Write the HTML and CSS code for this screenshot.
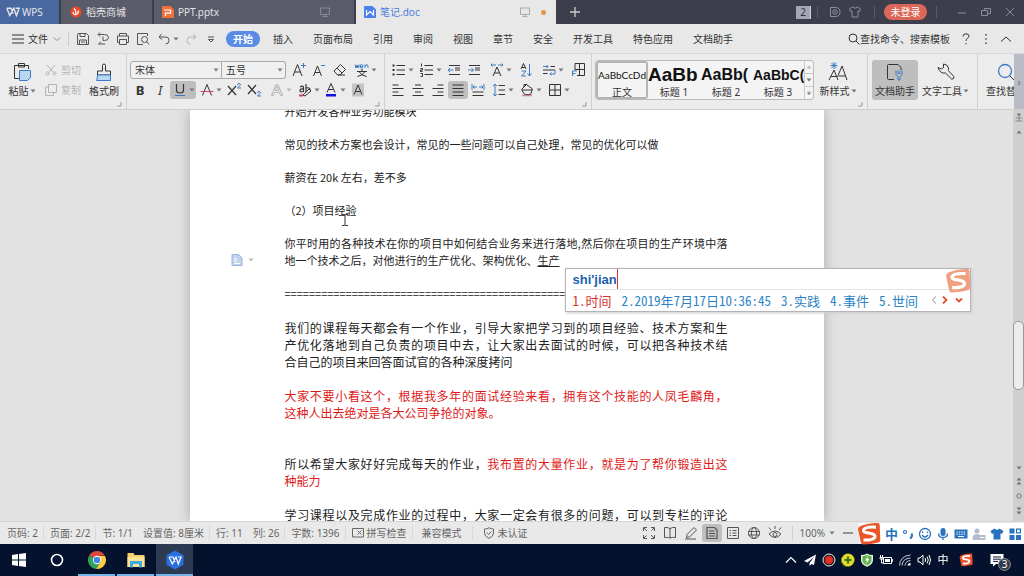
FILE: index.html
```html
<!DOCTYPE html>
<html lang="zh-CN">
<head>
<meta charset="utf-8">
<meta name="viewport" content="width=device-width, initial-scale=1">
<title>笔记.doc - WPS</title>
<link rel="stylesheet" href="styles.css">
</head>
<body>
<svg class="sprite" aria-hidden="true">
  <symbol id="down" viewBox="0 0 6 4"><path d="M0.5 0.5h5L3 3.5z" fill="currentColor"/></symbol>
  <symbol id="up" viewBox="0 0 6 4"><path d="M0.5 3.5h5L3 0.5z" fill="currentColor"/></symbol>
  <symbol id="corner" viewBox="0 0 6 6"><path d="M5 1v4H1" fill="none" stroke="currentColor"/></symbol>
  <symbol id="wps" viewBox="0 0 14 10"><path d="M.8 1.2H5l2 5.6M.8 1.2l3 7.4L7.8 1.2l2.6 7.4 2.8-7.4H9.6" fill="none" stroke="currentColor" stroke-width="1.4"/></symbol>
  <symbol id="monitor" viewBox="0 0 12 12"><path d="M1.5 2h9v6.5h-9zM6 8.500v2M3.500 10.500h5" fill="none" stroke="currentColor"/></symbol>
  <symbol id="sogou" viewBox="0 0 24 24"><path d="M5 3.500Q12 .5 21 1q1.500 0 1.700 2l.6 15q0 2-2 2.600-8 2-15 1.900-2 0-2.500-2L1 7q0-2 4-3.500z" fill="currentColor"/><path d="M19 5.200Q8 4.500 6.500 8c-1 4 11.500 2 11.500 6.300 0 3.500-7 4.200-11.500 3.600" fill="none" stroke="#fff" stroke-width="3"/></symbol>
  <symbol id="list" viewBox="0 0 16 16"><path d="M5.500 3.500H14M5.500 8H14M5.500 12.500H14" stroke="currentColor"/><path d="M1.500 2.500h2v2h-2zM1.500 7h2v2h-2zM1.500 11.500h2v2h-2z" fill="currentColor"/></symbol>
</svg>

<header class="titlebar">
  <button class="home-tab"><svg class="logo-s"><use href="#wps"/></svg>WPS</button>
  <button class="tab tab-shop"><svg class="file-ic" viewBox="0 0 12 12"><path d="M6 .5a5.500 5.500 0 1 1-5.300 7Q-.2 4 2 2.600 3.500 0 6 .5z" fill="#e84a26"/><path d="M4 2.500q2 2 2 5M8.500 4.500q0 3-2.500 4-2.500.5-3-2.500" fill="none" stroke="#fff" stroke-width="1.300"/></svg>稻壳商城</button>
  <button class="tab tab-file"><svg class="file-ic" viewBox="0 0 12 12"><path d="M1 0h7.500L12 3.500V11q0 1-1 1H1q-1 0-1-1V1q0-1 1-1z" fill="#f2703a"/><path d="M2 4h6.500v3.200H3.500V10" fill="none" stroke="#fff" stroke-width="1.200"/></svg>PPT.pptx<svg class="ic12 push"><use href="#monitor"/></svg></button>
  <button class="tab tab-file active"><svg class="file-ic" viewBox="0 0 12 12"><path d="M1 0h7.500L12 3.500V11q0 1-1 1H1q-1 0-1-1V1q0-1 1-1z" fill="#4a80ea"/><path d="M2.500 4v5L6 5.500 9.500 9V4" fill="none" stroke="#fff" stroke-width="1.200"/></svg>笔记.doc<svg class="ic12 push"><use href="#monitor"/></svg><span class="dot"></span></button>
  <button class="new-tab" aria-label="新建"><svg class="ic12" viewBox="0 0 12 12"><path d="M6 1v10M1 6h10" stroke="currentColor" stroke-width="1.300"/></svg></button>
  <div class="window-tools">
    <span class="count">2</span><i class="bar"></i>
    <svg class="ic14" viewBox="0 0 14 14"><path d="M2.500 2.500h5q4.500 0 4.500 4.500t-4.500 4.500h-5zM2.500 11.500v-9" fill="none" stroke="currentColor"/><circle cx="7" cy="7" r="2.300" fill="none" stroke="currentColor"/><circle cx="7" cy="7" r=".8" fill="currentColor"/></svg>
    <svg class="ic14" viewBox="0 0 14 14"><path d="M4.500 2 1.500 4l1 2.500 1.500-.5v6h6V6l1.500.5 1-2.500-3-2Q7 4.500 4.500 2z" fill="none" stroke="currentColor"/></svg>
    <i class="bar"></i><button class="login">未登录</button><i class="bar"></i>
    <button class="win" aria-label="最小化"><svg class="ic12" viewBox="0 0 12 12"><path d="M2 7h8" stroke="currentColor"/></svg></button>
    <button class="win" aria-label="还原"><svg class="ic12" viewBox="0 0 12 12"><path d="M1.500 4.500h6v5h-6zM4.500 4.500v-2h6v5h-3" fill="none" stroke="currentColor"/></svg></button>
    <button class="win" aria-label="关闭"><svg class="ic12" viewBox="0 0 12 12"><path d="m2 2 8 8M10 2l-8 8" stroke="currentColor"/></svg></button>
  </div>
</header>

<nav class="menubar">
  <button class="file-menu"><svg class="ic12" viewBox="0 0 12 12"><path d="M0 2h12M0 6h12M0 10h12" stroke="currentColor"/></svg>文件<svg class="ic10" viewBox="0 0 10 10"><path d="m1.500 3.500 3.500 3 3.500-3" fill="none" stroke="#999"/></svg></button>
  <div class="quick">
    <button class="ib" aria-label="保存"><svg class="ic" viewBox="0 0 16 16"><path d="M3 2.500h8.500l2 2v9H2.500v-10zM5 2.500v3h5v-3M4.500 13.500V9h7v4.500M6 11h4" fill="none" stroke="currentColor"/></svg></button>
    <button class="ib" aria-label="输出为PDF"><svg class="ic" viewBox="0 0 16 16"><path d="M3.500 3.500h6q4 0 4 3t-4 3H8V5.500M5 1.500l-2 2 2 2M10 13H3.500M6 11l-2.500 2" fill="none" stroke="currentColor"/></svg></button>
    <button class="ib" aria-label="打印"><svg class="ic" viewBox="0 0 16 16"><path d="M4.500 5V2.500h7V5M4.500 11.500H2.500V5h11v6.500h-2M4.500 8.500h7v5h-7z" fill="none" stroke="currentColor"/></svg></button>
    <button class="ib" aria-label="打印预览"><svg class="ic" viewBox="0 0 16 16"><path d="M12.500 5V2.500h-10v11H8" fill="none" stroke="currentColor"/><circle cx="9.500" cy="8.500" r="3" fill="none" stroke="currentColor"/><path d="m11.500 10.500 2.500 3" stroke="currentColor"/></svg></button>
    <button class="ib w28" aria-label="撤销"><svg class="ic" viewBox="0 0 16 16"><path d="M5.500 3 3 6l3 2.500M3.500 6H10q3 0 3 3.500T9.500 13" fill="none" stroke="currentColor"/></svg><svg class="arr"><use href="#down"/></svg></button>
    <button class="ib faint" aria-label="恢复"><svg class="ic" viewBox="0 0 16 16"><path d="M10.500 3 13 6l-3 2.500M12.500 6H7q-3 0-3 3.500T7.500 13" fill="none" stroke="currentColor"/></svg></button>
    <button class="ib" aria-label="自定义快速访问工具栏"><svg class="ic" viewBox="0 0 16 16"><path d="M5 6h6M5.500 8.500 8 11l2.500-2.500z" fill="none" stroke="currentColor"/></svg></button>
  </div>
  <div class="menus">
    <button class="on">开始</button><button>插入</button><button>页面布局</button><button>引用</button><button>审阅</button><button>视图</button><button>章节</button><button>安全</button><button>开发工具</button><button>特色应用</button><button>文档助手</button>
  </div>
  <div class="menu-right">
    <button class="find"><svg class="ic12" viewBox="0 0 12 12"><circle cx="5" cy="5" r="4" fill="none" stroke="currentColor"/><path d="m8 8 3.500 3.500" stroke="currentColor"/></svg>查找命令、搜索模板</button>
    <button class="ib" aria-label="帮助"><svg class="ic12" viewBox="0 0 12 12"><path d="M3 3.500Q3 .8 6 .8t3 2.500C9 5 6 5 6 8" fill="none" stroke="currentColor"/><path d="M6 10v1.300" stroke="currentColor"/></svg></button>
    <button class="ib" aria-label="更多"><svg class="ic12" viewBox="0 0 12 12"><path d="M6 1v1.500M6 5.200v1.500M6 9.500V11" stroke="currentColor" stroke-width="1.300"/></svg></button>
    <button class="ib" aria-label="收起功能区"><svg class="ic12" viewBox="0 0 12 12"><path d="M1 8.500 6 4l5 4.500" fill="none" stroke="currentColor"/></svg></button>
  </div>
</nav>

<section class="ribbon" aria-label="开始">
  <div class="group clip">
    <button class="big"><svg class="ic20" viewBox="0 0 20 20"><path d="M8 16.500H2.500V3.500h14V7M6.500 5V1.500h6V5z" fill="none" stroke="currentColor"/><path d="M7.500 8.500h11v7l-3 3h-8z" fill="#b9d7f2" stroke="#3c7cc4"/></svg><span>粘贴<svg class="arr"><use href="#down"/></svg></span></button>
    <div class="stack">
      <button class="side"><svg class="ic12" viewBox="0 0 12 12"><path d="m2 1 6.500 7.500M10 1 3.500 8.500" stroke="currentColor"/><circle cx="2.500" cy="9.500" r="1.500" fill="none" stroke="currentColor"/><circle cx="9.500" cy="9.500" r="1.500" fill="none" stroke="currentColor"/></svg>剪切</button>
      <button class="side"><svg class="ic12" viewBox="0 0 12 12"><path d="M3.500.5h8v8h-8zM3.500 3h-3v8.500h8v-3" fill="none" stroke="currentColor"/></svg>复制</button>
    </div>
    <button class="big"><svg class="ic20" viewBox="0 0 20 20"><path d="M8.500 9V3.500q0-1.500 1.500-1.500t1.500 1.500V9h5v4h-13V9z" fill="none" stroke="currentColor"/><path d="M3.500 13h13v5.500h-14q1-2 1-5.500z" fill="#b9d7f2" stroke="#3c7cc4"/></svg><span>格式刷</span></button>
    <svg class="launch"><use href="#corner"/></svg>
  </div>

  <div class="group font">
    <div class="row">
      <label class="combo wide"><select aria-label="字体"><option>宋体</option></select><svg class="arr"><use href="#down"/></svg></label><label class="combo"><select aria-label="字号"><option>五号</option></select><svg class="arr"><use href="#down"/></svg></label>
      <button class="ib grow" aria-label="增大字号"><svg class="ic" viewBox="0 0 16 16"><path d="M2 14 6.500 2.500 11 14M3.500 10h6" fill="none" stroke="currentColor"/><path d="M12.500 1v5M10 3.500h5" stroke="#3c7cc4"/></svg></button>
      <button class="ib" aria-label="减小字号"><svg class="ic" viewBox="0 0 16 16"><path d="M2.500 14 6.500 4l4 10M4 10.500h5" fill="none" stroke="currentColor"/><path d="M10 3.500h4" stroke="#3c7cc4"/></svg></button>
      <button class="ib" aria-label="清除格式"><svg class="ic" viewBox="0 0 16 16"><path d="m3 9 6.500-6.500 5 5L9 13H6.500zM6 6l5 5M7 13h7" fill="none" stroke="currentColor"/></svg></button>
      <button class="ib w32" aria-label="拼音指南"><svg class="ic" viewBox="0 0 16 16"><path d="M1 2.500 2 6l1-3 1 3 1-3.500M6 4.500h3q0-2-1.500-2T6 4.500 7.500 6H9M11 6V2.500M11 4q2.500-3 3 0v2" fill="none" stroke="#3c7cc4"/><path d="M8 7v2M3 9.500h10M5 9.500q2 4 7.500 5M11 9.500q-2 4-7.500 5" fill="none" stroke="currentColor"/></svg><svg class="arr"><use href="#down"/></svg></button>
    </div>
    <div class="row">
      <button class="ib glyph" aria-label="加粗"><b>B</b></button>
      <button class="ib glyph" aria-label="倾斜"><i>I</i></button>
      <button class="ib w26 pressed" aria-label="下划线"><svg class="ic" viewBox="0 0 16 16"><path d="M4.500 2v6q0 3 3.500 3t3.500-3V2" fill="none" stroke="currentColor" stroke-width="1.200"/><path d="M3 13.500h10" stroke="#3c7cc4"/></svg><svg class="arr"><use href="#down"/></svg></button>
      <button class="ib w28" aria-label="删除线"><svg class="ic" viewBox="0 0 16 16"><path d="M3.500 13.500 8 2.500l4.500 11" fill="none" stroke="currentColor"/><path d="M1.500 9.500h13" stroke="#d5455a"/></svg><svg class="arr"><use href="#down"/></svg></button>
      <button class="ib" aria-label="上标"><svg class="ic" viewBox="0 0 16 16"><path d="m2 4 8 9M10 4l-8 9" stroke="currentColor" stroke-width="1.200"/><path d="M11.500 3q0-1.500 1.500-1.500t1.500 1.300L11.500 6H15" fill="none" stroke="#3c7cc4"/></svg></button>
      <button class="ib" aria-label="下标"><svg class="ic" viewBox="0 0 16 16"><path d="m2 3 8 9M10 3l-8 9" stroke="currentColor" stroke-width="1.200"/><path d="M11.500 11q0-1.500 1.500-1.500t1.500 1.300L11.500 14H15" fill="none" stroke="#3c7cc4"/></svg></button>
      <button class="ib w32 faint" aria-label="文字效果"><svg class="ic" viewBox="0 0 16 16"><path d="M2.500 13.500 7 2.500h2l4.500 11h-2l-1-3h-5l-1 3zM6 8.500h4L8 4z" fill="none" stroke="currentColor"/></svg><svg class="arr"><use href="#down"/></svg></button>
      <button class="ib w24" aria-label="突出显示"><svg class="ic" viewBox="0 0 16 16"><path d="M3 5q3-2 3.500.5V10M6.500 7Q3 6.500 3 8.500t3.500 1M9 2v8q4 1 4-2t-4-2" fill="none" stroke="currentColor" stroke-width="1.200"/><path d="m6 13 6-6 2 2-6 5z" fill="#eee" stroke="currentColor"/><path d="M2 13.500h4" stroke="#c8485a" stroke-width="2"/></svg><svg class="arr"><use href="#down"/></svg></button>
      <button class="ib w28" aria-label="字体颜色"><svg class="ic" viewBox="0 0 16 16"><path d="M4 10.500 8 1.500l4 9M5.500 7.500h5" fill="none" stroke="currentColor"/><path d="M3 12h10v2.500H3z" fill="#1010e0"/></svg><svg class="arr"><use href="#down"/></svg></button>
      <button class="ib" aria-label="字符底纹"><svg class="ic" viewBox="0 0 16 16"><path d="M2 1.500h12v13H2z" fill="#c4c4c4"/><path d="M4 12.500 8 3l4 9.500M5.500 9.500h5" fill="none" stroke="currentColor"/></svg></button>
    </div>
    <svg class="launch"><use href="#corner"/></svg>
  </div>

  <div class="group para">
    <div class="row">
      <button class="ib w28" aria-label="项目符号"><svg class="ic"><use href="#list"/></svg><svg class="arr"><use href="#down"/></svg></button>
      <button class="ib w28" aria-label="编号"><svg class="ic" viewBox="0 0 16 16"><path d="M5.500 3.500H14M5.500 8H14M5.500 12.500H14M2.500 1.500v3M1.500 6.500h2v1.500h-2v1.500h2M1.500 11.500h2v3h-2" fill="none" stroke="currentColor"/></svg><svg class="arr"><use href="#down"/></svg></button>
      <button class="ib" aria-label="减少缩进"><svg class="ic" viewBox="0 0 16 16"><path d="M3 3.500h11M9 8h5M3 12.500h11M9 6h5" stroke="currentColor"/><path d="M7.500 8H2M4 6 2 8l2 2" fill="none" stroke="#3c7cc4"/></svg></button>
      <button class="ib" aria-label="增加缩进"><svg class="ic" viewBox="0 0 16 16"><path d="M3 3.500h11M9 8h5M3 12.500h11M9 6h5" stroke="currentColor"/><path d="M2 8h5.500M5.500 6l2 2-2 2" fill="none" stroke="#3c7cc4"/></svg></button>
      <button class="ib w32" aria-label="中文版式"><svg class="ic" viewBox="0 0 16 16"><path d="M4 14 8 5l4 9M5.500 11h5" fill="none" stroke="currentColor"/><path d="M7 3H2M3.500 1.500 2 3l1.500 1.500M9 3h5M12.500 1.500 14 3l-1.500 1.500" fill="none" stroke="#3c7cc4"/></svg><svg class="arr"><use href="#down"/></svg></button>
      <button class="ib" aria-label="排序"><svg class="ic" viewBox="0 0 16 16"><path d="M3 7 5.500 1.500 8 7M4 5.500h3" fill="none" stroke="currentColor"/><path d="M3.500 9H8l-4.500 5H8M11.500 2v12M9.500 11.500l2 2.500 2-2.500" fill="none" stroke="#3c7cc4"/></svg></button>
      <button class="ib w32" aria-label="显示编辑标记"><svg class="ic" viewBox="0 0 16 16"><path d="M9.500 4.500H14M2 8h12M2 11.500h4.500" stroke="currentColor"/><path d="M2 4.500h5M5.500 3 7 4.500 5.500 6M14 8v4H9M10.500 10.500 9 12l1.500 1.500" fill="none" stroke="#3c7cc4"/></svg><svg class="arr"><use href="#down"/></svg></button>
      <button class="ib" aria-label="制表位"><svg class="ic" viewBox="0 0 16 16"><path d="M5 8V1.500h9.500v12H7M5 7.500h9.500M9.500 1.500v12" fill="none" stroke="currentColor"/><path d="M2.500 14V9H7M2.500 11.500h3" fill="none" stroke="#3c7cc4"/></svg></button>
    </div>
    <div class="row">
      <button class="ib" aria-label="左对齐"><svg class="ic" viewBox="0 0 16 16"><path d="M2.500 3h6M2.500 6.500h11M2.500 10h6M2.500 13.500h11" stroke="currentColor"/></svg></button>
      <button class="ib" aria-label="居中"><svg class="ic" viewBox="0 0 16 16"><path d="M5 3h6M2.500 6.500h11M5 10h6M2.500 13.500h11" stroke="currentColor"/></svg></button>
      <button class="ib" aria-label="右对齐"><svg class="ic" viewBox="0 0 16 16"><path d="M7.500 3h6M2.500 6.500h11M7.500 10h6M2.500 13.500h11" stroke="currentColor"/></svg></button>
      <button class="ib pressed" aria-label="两端对齐"><svg class="ic" viewBox="0 0 16 16"><path d="M2.500 3h11M2.500 6.500h11M2.500 10h11M2.500 13.500h11" stroke="currentColor"/></svg></button>
      <button class="ib" aria-label="分散对齐"><svg class="ic" viewBox="0 0 16 16"><path d="M2.500 10h11M2.500 13.500h11" stroke="currentColor"/><path d="M2 2v6M14 2v6M3 5h4M4.500 3.500 3 5l1.500 1.500M9 5h4M11.500 3.500 13 5l-1.500 1.500" fill="none" stroke="#3c7cc4"/></svg></button>
      <button class="ib w28" aria-label="行距"><svg class="ic" viewBox="0 0 16 16"><path d="M7.500 3.500H14M7.500 8H14M7.500 12.500H14" stroke="currentColor"/><path d="M4 2v12M2 4l2-2 2 2M2 12l2 2 2-2" fill="none" stroke="#3c7cc4"/></svg><svg class="arr"><use href="#down"/></svg></button>
      <button class="ib w28" aria-label="底纹颜色"><svg class="ic" viewBox="0 0 16 16"><path d="m2.500 7.500 5-5 6 4.500-2 5.500h-6zM5 5V2.500h3M3 8h10" fill="none" stroke="currentColor"/><path d="M3 13.500h10" stroke="#d58a94" stroke-width="1.500"/></svg><svg class="arr"><use href="#down"/></svg></button>
      <button class="ib w28" aria-label="边框"><svg class="ic" viewBox="0 0 16 16"><path d="M2.500 2.500h11v11h-11zM8 2.500v11M2.500 8h11" fill="none" stroke="currentColor"/></svg><svg class="arr"><use href="#down"/></svg></button>
    </div>
    <svg class="launch"><use href="#corner"/></svg>
  </div>

  <div class="group styles">
    <div class="gallery">
      <button class="style chosen"><span class="s0">AaBbCcDd</span>正文</button>
      <button class="style"><span class="s1">AaBb</span>标题 1</button>
      <button class="style"><span class="s2">AaBb(</span>标题 2</button>
      <button class="style"><span class="s3">AaBbC(</span>标题 3</button>
      <div class="scroller"><button aria-label="上一行"><svg class="arr pale"><use href="#up"/></svg></button><button aria-label="下一行"><svg class="arr"><use href="#down"/></svg></button><button aria-label="全部样式"><svg class="arr" viewBox="0 0 6 6"><path d="M.5.500h5M.5 2.500h5L3 5.500z" fill="currentColor" stroke="currentColor" stroke-width=".6"/></svg></button></div>
    </div>
    <button class="big"><svg class="ic20" viewBox="0 0 20 20"><path d="M1 18 6 8l4 10M3 14.500h5M9.500 15 14 4l5 14M11 14h6.500" fill="none" stroke="currentColor"/><path d="M6 0v7M2.500 3.500h7M3.500 1l5 5M8.500 1l-5 5" stroke="#3c7cc4"/></svg><span>新样式<svg class="arr"><use href="#down"/></svg></span></button>
    <svg class="launch"><use href="#corner"/></svg>
  </div>

  <div class="group tools">
    <button class="big pressed"><svg class="ic20" viewBox="0 0 20 20"><path d="M9 17.500H3.500q-1 0-1-1v-13q0-1 1-1H13l3 3V8" fill="none" stroke="currentColor"/><path d="M11 8.500v4q1 1.500 2 2V18h2v-3.500q1-.5 2-2v-4M13 8.500v3h2v-3" fill="none" stroke="#3c7cc4"/></svg><span>文档助手</span></button>
    <button class="big"><svg class="ic20" viewBox="0 0 20 20"><path d="M2 5.500 5.500 7l2-1.500V2q4 0 5 4 .3 1.500-.2 2.500l5.500 6q.8 2.500-2 2.700L9.500 11Q4 12 2 5.500z" fill="none" stroke="currentColor"/></svg><span>文字工具<svg class="arr"><use href="#down"/></svg></span></button>
  </div>
  <div class="group search">
    <button class="big"><svg class="ic20" viewBox="0 0 20 20"><circle cx="9" cy="9" r="6.500" fill="none" stroke="#3c7cc4" stroke-width="1.300"/><path d="m14 14 4 4" stroke="currentColor"/></svg><span>查找替换</span></button>
  </div>
  <button class="more" aria-label="向右滚动">›</button>
</section>

<main class="workspace">
  <div class="canvas">
    <article class="page">
      <div class="text small">
        <p>开始开发各种业务功能模块</p>
        <p>常见的技术方案也会设计，常见的一些问题可以自己处理，常见的优化可以做</p>
        <p>薪资在 20k 左右，差不多</p>
        <p>（2）项目经验</p>
        <p><span class="full">你平时用的各种技术在你的项目中如何结合业务来进行落地,然后你在项目的生产环境中落</span>地一个技术之后，对他进行的生产优化、架构优化、<u>生产</u></p>
        <p class="rule">==============================================</p>
      </div>
      <div class="text large">
        <p><span class="full">我们的课程每天都会有一个作业，引导大家把学习到的项目经验、技术方案和生</span><span class="full">产优化落地到自己负责的项目中去，让大家出去面试的时候，可以把各种技术结</span>合自己的项目来回答面试官的各种深度拷问</p>
        <p class="red"><span class="full">大家不要小看这个，根据我多年的面试经验来看，拥有这个技能的人凤毛麟角，</span>这种人出去绝对是各大公司争抢的对象。</p>
        <p class="spaced"><span class="full">所以希望大家好好完成每天的作业，<span class="red">我布置的大量作业，就是为了帮你锻造出这</span></span><span class="red">种能力</span></p>
        <p><span class="full">学习课程以及完成作业的过程中，大家一定会有很多的问题，可以到专栏的评论</span></p>
      </div>
      <svg class="beam" viewBox="0 0 8 12"><path d="M1 .5h2.500l.5.500.5-.5H7M4 1v10M1 11.500h2.500l.5-.5.5.5H7" fill="none" stroke="#333"/></svg>
      <button class="smart" aria-label="段落布局"><svg class="ic12" viewBox="0 0 12 12"><path d="M1 .5h6.500L11 4v7.500H1z" fill="#c3d3ee" stroke="#9cb3dc"/><path d="M3 5h3M3 7h3M3 9.500h6" stroke="#fff"/></svg><svg class="arr"><use href="#down"/></svg></button>
      <div class="ime">
        <div class="compose">shi'jian</div>
        <ol class="cands"><li class="first">1.时间</li><li>2.2019年7月17日10:36:45</li><li>3.实践</li><li>4.事件</li><li>5.世间</li></ol>
        <svg class="pager" viewBox="0 0 36 10"><path d="M6 1.500 2.500 5 6 8.500" fill="none" stroke="#bbb" stroke-width="1.200"/><path d="M13 1.500 16.500 5 13 8.500M26 3.500 29 6.500l3-3" fill="none" stroke="#e0552c" stroke-width="1.800"/></svg>
        <svg class="ime-logo"><use href="#sogou"/></svg>
      </div>
    </article>
  </div>
  <aside class="scroll">
    <svg class="ic10" viewBox="0 0 10 10"><path d="M3 1h4L5 3zM1.500 5h7M1.500 8h7M5 3v5" fill="#777" stroke="#888"/></svg>
    <svg class="arr"><use href="#up"/></svg>
    <div class="track"><div class="thumb"></div></div>
    <svg class="arr"><use href="#down"/></svg>
    <svg class="ic8" viewBox="0 0 8 8"><path d="M1.500 3.500h5L4 .5zM1.500 7.500h5L4 4.500z" fill="currentColor"/></svg>
    <svg class="ic8" viewBox="0 0 8 8"><circle cx="4" cy="4" r="2.200" fill="none" stroke="currentColor"/></svg>
    <svg class="ic8" viewBox="0 0 8 8"><path d="M1.500.5h5L4 3.500zM1.500 4.500h5L4 7.500z" fill="currentColor"/></svg>
  </aside>
</main>

<footer class="status">
  <span class="cell">页码: 2</span><span class="cell">页面: 2/2</span><span class="cell open">节: 1/1</span><span class="cell">设置值: 8厘米</span><span class="cell open">行: 11</span><span class="cell">列: 26</span><span class="cell">字数: 1396</span>
  <button class="cell"><svg class="ic12" viewBox="0 0 12 12"><path d="M4 1.500H.5v8.500H4M4 1.500h7.500V10H4M5.500 3.500l4 4M9.500 3.500l-4 4" fill="none" stroke="currentColor"/></svg>拼写检查</button><button class="cell wide">兼容模式</button><button class="cell last"><svg class="ic12" viewBox="0 0 12 12"><path d="M6 .8q2 1.200 4.500 1.200v4Q10.500 9.500 6 11.300 1.500 9.500 1.500 6V2Q4 2 6 .8zM4 5.500l1.500 2L8.500 4.500" fill="none" stroke="currentColor"/></svg>未认证</button>
  <div class="views">
    <button class="ib" aria-label="全屏"><svg class="ic" viewBox="0 0 16 16"><path d="M2.500 6V2.500H6M10 2.500h3.500V6M13.500 10v3.500H10M6 13.500H2.500V10M3 3l3 3M13 13l-3-3M13 3l-2.500 2.500M3 13l2.500-2.500" fill="none" stroke="currentColor"/></svg></button>
    <button class="ib" aria-label="阅读版式"><svg class="ic" viewBox="0 0 16 16"><path d="M8 3.500Q5 2 2.500 2.500v10q3-.5 5.500.5 2.500-1 5.500-.5v-10Q11 2 8 3.500zV13" fill="none" stroke="currentColor"/></svg></button>
    <button class="ib" aria-label="写作模式"><svg class="ic" viewBox="0 0 16 16"><path d="m4 9.500 7-7 2.500 2.500-7 7-3 .5zM2 14h11" fill="none" stroke="currentColor"/></svg></button>
    <button class="ib pressed" aria-label="页面视图"><svg class="ic" viewBox="0 0 16 16"><path d="M3 2.500h7.500l2.500 2.500v8.500H3zM5 6h5.500M5 8.500h6M5 11h6" fill="none" stroke="currentColor" stroke-width="1.200"/></svg></button>
    <button class="ib" aria-label="大纲视图"><svg class="ic" viewBox="0 0 16 16"><path d="M2.500 2.500h11v11h-11zM4.500 5.500H6M7.500 5.500h4M4.500 8H6M7.500 8h4M4.500 10.500H6M7.500 10.500h4" fill="none" stroke="currentColor"/></svg></button>
    <button class="ib" aria-label="Web版式"><svg class="ic" viewBox="0 0 16 16"><circle cx="8" cy="8" r="5.500" fill="none" stroke="currentColor"/><ellipse cx="8" cy="8" rx="2.500" ry="5.500" fill="none" stroke="currentColor"/><path d="M2.500 6.500h11M2.500 10h11" stroke="currentColor"/></svg></button>
    <button class="ib" aria-label="护眼模式"><svg class="ic" viewBox="0 0 16 16"><path d="M2 9q6-6 12 0-6 7-12 0zM8 4V1M4 5 2 2.500M12 5l2-2.500" fill="none" stroke="currentColor"/><circle cx="8" cy="9.500" r="2" fill="none" stroke="currentColor"/></svg></button>
  </div>
  <button class="zoom">100%<svg class="arr"><use href="#down"/></svg></button>
  <button class="minus" aria-label="缩小"><svg class="ic10" viewBox="0 0 10 10"><path d="M0 5h10" stroke="currentColor" stroke-width="1.300"/></svg></button>
  <div class="imebar">
    <svg class="bar-logo"><use href="#sogou"/></svg>
    <span class="zh">中</span>
    <svg class="ic12" viewBox="0 0 12 12"><circle cx="3" cy="4" r="1.500" fill="none" stroke="currentColor" stroke-width="1.200"/><path d="M9.500 5.500q1.500 3-1.500 5" fill="none" stroke="currentColor" stroke-width="2"/></svg>
    <svg class="ic14" viewBox="0 0 14 14"><circle cx="7" cy="7" r="5.500" fill="none" stroke="currentColor" stroke-width="1.300"/><path d="M4 8q3 4 6 0M4.500 4.500v1.500M9.500 4.500v1.500" fill="none" stroke="currentColor" stroke-width="1.300"/></svg>
    <svg class="ic14" viewBox="0 0 14 14"><rect x="4.500" y="1" width="5" height="8" rx="2.500" fill="currentColor"/><path d="M2.500 6.500q0 4 4.500 4t4.500-4M7 10.500V13" fill="none" stroke="currentColor" stroke-width="1.300"/></svg>
    <svg class="ic14" viewBox="0 0 14 14"><path d="M.5 2.500h13v9H.5z" fill="currentColor"/><path d="M2.500 5h9M2.500 7.200h9" stroke="#fff" stroke-dasharray="1.400 1"/><path d="M4 9.500h6" stroke="#fff"/></svg>
    <svg class="ic14 pale-ic" viewBox="0 0 14 14"><circle cx="5" cy="4" r="2.500" fill="currentColor"/><path d="M.5 12q0-5 4.500-5 2 0 3 1h5.500v5H.5z" fill="currentColor"/><path d="M8 10.500h4.500" stroke="#fff"/></svg>
    <svg class="ic14" viewBox="0 0 14 14"><path d="M4.500 1.500.5 4l1.500 3 1.500-.7V12.500h7V6.300L12 7l1.500-3-4-2.500Q7 4 4.500 1.500z" fill="currentColor"/></svg>
    <svg class="ic14" viewBox="0 0 14 14"><path d="M1.500 1.500h5v5h-5zM1.500 8h5v5h-5zM8 8h5v5H8z" fill="currentColor"/><path d="M8.600 2.100h3.800v3.800H8.600z" fill="none" stroke="currentColor" stroke-width="1.200"/></svg>
  </div>
</footer>

<div class="taskbar">
  <button class="task" aria-label="开始菜单"><svg class="ic14" viewBox="0 0 14 14"><path d="m0 2 6-.9v5.400H0zM7 1l7-1v6.500H7zM0 7.500h6v5.400L0 12zM7 7.500h7V14l-7-1z" fill="#fff"/></svg></button>
  <button class="task" aria-label="Cortana"><svg class="ic14" viewBox="0 0 14 14"><circle cx="7" cy="7" r="5.500" fill="none" stroke="#fff" stroke-width="1.600"/></svg></button>
  <button class="task open" aria-label="Chrome"><svg class="ic20" viewBox="0 0 20 20"><path d="M10 10 2.200 5.500A9 9 0 0 1 17.800 5.500L10 6z" fill="#dc4a3c"/><path d="M10 10 2.200 5.500A9 9 0 0 0 9.200 19l4.300-7z" fill="#2fa355"/><path d="M10 6h8a9 9 0 0 1-8.800 13l4.300-7z" fill="#fbcb3c"/><circle cx="10" cy="10" r="4.200" fill="#fff"/><circle cx="10" cy="10" r="3.300" fill="#4583ee"/></svg></button>
  <button class="task open" aria-label="文件资源管理器"><svg class="ic20" viewBox="0 0 20 20"><path d="M1.500 3h6l1 2h10v12h-17z" fill="#f4cf6a"/><path d="M1.500 7h17v10h-17z" fill="#fbe299"/><path d="M4 11h12v6.500h-3V14H7v3.500H4z" fill="#40a9d8"/></svg></button>
  <button class="task open current" aria-label="WPS"><svg class="ic20" viewBox="0 0 20 20"><path d="m10 .5 8.500 4.700v9.600L10 19.500l-8.500-4.700V5.200z" fill="#2a6fdf"/><path d="M4 7h4l2 5M4 7l3.300 7L11 7l2.300 7L16 7h-3" fill="none" stroke="#fff" stroke-width="1.200"/></svg></button>
  <div class="tray">
    <svg class="ic14" viewBox="0 0 14 14"><path d="m2 9.500 5-5 5 5" fill="none" stroke="currentColor" stroke-width="1.200"/></svg>
    <svg class="ic14" viewBox="0 0 14 14"><path d="M13 1.500 1 8l3.500 1.500L11 4 6.500 10v3l2-2 2.500 1z" fill="currentColor"/></svg>
    <svg class="ic14" viewBox="0 0 14 14"><circle cx="7" cy="7" r="6" fill="#222" stroke="#eee"/><circle cx="7" cy="7" r="4" fill="#e32b28"/></svg>
    <svg class="ic14" viewBox="0 0 14 14"><circle cx="7" cy="7" r="6.500" fill="#e8d923"/><path d="M1 4a6.500 6.500 0 0 0 11 7.200A6.500 6.500 0 0 1 1 10z" fill="#4aa52c"/><path d="M7 3.500v7M3.500 7h7" stroke="#2c7d20" stroke-width="2.200"/></svg>
    <svg class="ic14" viewBox="0 0 14 14"><path d="M7 .5Q9.500 2 13 2v5q0 4.500-6 6.800Q1 11.500 1 7V2q3.500 0 6-1.500z" fill="#e6f0dc"/><path d="M7 2q2 1 4.500 1.200V7q0 3.500-4.500 5.300Q2.500 10.500 2.500 7V3.200Q5 3 7 2z" fill="#5fb04a"/><path d="M8 3 5 7.500h2L6 11l3.500-5h-2z" fill="#fff"/></svg>
    <svg class="ic14" viewBox="0 0 14 14"><path d="M4.500 4.500h8v6h-8zM13.300 6v3" fill="none" stroke="currentColor"/><path d="M6 6h5v3H6z" fill="currentColor"/><path d="M1.500 2v2M3.500 2v2M1 4.500h3v1.500H1zM2.500 6v4h2" fill="none" stroke="currentColor"/></svg>
    <svg class="ic14" viewBox="0 0 14 14"><path d="M1.500 12.500Q2 3 12.500 2M4 12.500Q4.500 5.500 12.500 5M7 12.500q.5-4.500 5.500-5" fill="none" stroke="#c5cad4"/><path d="M9.500 12.500q0-2.500 3-2.500v2.500z" fill="currentColor"/></svg>
    <svg class="ic14" viewBox="0 0 14 14"><path d="M1 5h2l3-3v10L3 9H1zM8 5q1.500 2 0 4M10 3.500q2.500 3.500 0 7M12 2q3 5 0 10" fill="none" stroke="currentColor"/></svg>
    <span class="lang">中</span>
    <svg class="ic14 tray-s"><use href="#sogou"/></svg>
    <button class="notes" aria-label="通知"><svg class="ic14" viewBox="0 0 14 14"><path d="M.5 1h13v10H6l-3 2.500V11H.5z" fill="#fff"/><path d="M3 4h8M3 6.200h8M3 8.400h5" stroke="#0a1730"/></svg><span class="badge">3</span></button>
  </div>
</div>
</body>
</html>
```
FILE: styles.css
```css
* { box-sizing: border-box; }
body {
  margin: 0;
  height: 100vh;
  display: flex;
  flex-direction: column;
  overflow: hidden;
  font: 10px/14px "Noto Sans", "Noto Sans CJK SC", sans-serif;
  color: #333;
  background: #e2e2e2;
}
button, select {
  font: inherit;
  color: inherit;
  background: none;
  border: 0;
  padding: 0;
  margin: 0;
}
button { white-space: nowrap; }
svg { flex: none; display: block; }
.sprite { position: absolute; width: 0; height: 0; }
.ic { width: 16px; height: 16px; }
.ic8 { width: 8px; height: 8px; }
.ic10 { width: 10px; height: 10px; }
.ic12 { width: 12px; height: 12px; }
.ic14 { width: 14px; height: 14px; }
.ic20 { width: 20px; height: 20px; }
.arr { width: 6px; height: 4px; color: #777; }
.pale { color: #bbb; }
.push { margin-left: auto; }

/* title bar */
.titlebar { display: flex; gap: 2px; flex: none; height: 24px; background: #3d3e4c; color: #e4e4e8; }
.home-tab { display: flex; align-items: center; gap: 2px; width: 59px; padding: 0 6px; background: #4a68a0; }
.logo-s { width: 14px; height: 10px; }
.tab { display: flex; align-items: center; gap: 4px; padding: 0 8px; background: #5b5c69; }
.tab-shop { width: 91px; padding-left: 9px; }
.tab-file { width: 200px; padding-right: 23px; }
.tab-file > .ic12 { color: #888995; }
.file-ic { width: 12px; height: 12px; }
.tab.active { background: #e8e8e8; color: #4a80e0; padding-right: 10px; }
.tab.active .ic12 { color: #aaa; margin-right: 6px; }
.dot { width: 5px; height: 5px; border-radius: 50%; background: #e0954a; }
.new-tab { width: 34px; display: grid; place-items: center; color: #ccc; }
.window-tools { margin-left: auto; display: flex; align-items: center; gap: 6px; color: #8d8e9b; padding-right: 5px; }
.count { width: 15px; height: 13px; background: #a5a6b3; border-right: 1px solid #d0d0d8; color: #33343f; text-align: center; line-height: 13px; }
.bar { width: 1px; height: 12px; background: #5a5b68; }
.ic14 + .bar { margin-left: 6px; }
.window-tools .bar + .ic14 { margin-left: 4px; }
.login { margin: 0 3px; width: 43px; height: 16px; border-radius: 8px; background: #dc6657; color: #fff; line-height: 16px; }
.win { width: 18px; display: grid; place-items: center; }
.login + .bar + .win { margin-left: 10px; }

/* menu bar */
.menubar { display: flex; align-items: center; flex: none; height: 30px; background: #e8e8e8; border-bottom: 1px solid #d8d8d8; }
.file-menu { display: flex; align-items: center; gap: 4px; margin-left: 12px; padding-right: 6px; border-right: 1px solid #ccc; }
.quick { display: flex; margin-left: 4px; color: #555; }
.menus { display: flex; align-items: center; gap: 20px; margin-left: 5px; }
.menus .on { width: 34px; height: 16px; margin-right: -7px; border-radius: 8px; background: #5a8be6; color: #fff; font-weight: 700; line-height: 16px; }
.menu-right { margin-left: auto; display: flex; align-items: center; padding-right: 8px; }
.find { display: flex; align-items: center; margin-right: 6px; }

.ib { display: flex; align-items: center; justify-content: center; gap: 1px; width: 20px; height: 20px; border-radius: 3px; }
.w24 { width: 24px; }
.w26 { width: 26px; }
.w28 { width: 28px; }
.w32 { width: 32px; }
.faint, .faint .arr { color: #b4b4b4; }
.pressed { background: #bebebe; }
.glyph { font-size: 13px; }

/* ribbon */
.ribbon { display: flex; flex: none; height: 56px; background: #ececec; border-bottom: 1px solid #cfcfcf; overflow: hidden; }
.group { position: relative; display: flex; flex: none; padding: 6px 3px 3px; border-right: 1px solid #d0d0d0; }
.launch { position: absolute; right: 4px; bottom: 2px; width: 6px; height: 6px; color: #999; }
.font, .para { flex-direction: column; }
.clip { width: 127px; gap: 4px; }
.big { display: flex; flex-direction: column; align-items: center; gap: 2px; min-width: 40px; height: 40px; padding-top: 2px; border-radius: 3px; }
.big span { display: flex; align-items: center; gap: 1px; }
.clip .big { min-width: 38px; }
.stack { display: flex; flex-direction: column; gap: 6px; padding-top: 3px; color: #b4b4b4; }
.side { display: flex; align-items: center; gap: 4px; }
.row { display: flex; align-items: center; height: 20px; }
.row .ib { height: 18px; }
.font { width: 258px; }
.para { width: 207px; }
.combo { position: relative; display: block; width: 64px; height: 18px; border: 1px solid #aaa; border-left: 0; background: #f0f0f0; border-radius: 0 3px 3px 0; }
.combo.wide { width: 92px; border-left: 1px solid #aaa; border-radius: 3px 0 0 3px; }
.combo select { appearance: none; width: 100%; height: 16px; padding-left: 4px; line-height: 14px; }
.combo .arr { position: absolute; right: 2px; top: 6px; pointer-events: none; }
.grow { margin-left: 3px; }
.styles { width: 276px; gap: 4px; }
.gallery { display: flex; width: 219px; height: 40px; border: 1px solid #bbb; border-radius: 3px; background: #f4f4f4; overflow: hidden; }
.style { display: flex; flex-direction: column; align-items: center; width: 52px; }
.style span { width: 100%; height: 24px; line-height: 28px; text-align: left; color: #111; }
.style.chosen { border: 2px solid #b4b4b4; border-radius: 3px; }
.style .s0 { height: 22px; font: 10px/24px Lato, sans-serif; text-align: center; }
.style .s1 { font: 700 19px/28px "Liberation Sans", sans-serif; }
.style .s2 { font: 700 16px/28px "Liberation Sans", sans-serif; padding-left: 1px; }
.style .s3 { font: 700 14px/28px "Liberation Sans", sans-serif; padding-left: 1px; }
.scroller { display: grid; width: 9px; border-left: 1px solid #ccc; }
.scroller button { display: grid; place-items: center; overflow: hidden; }
.scroller button + button { border-top: 1px solid #ccc; }
.tools { width: 110px; gap: 4px; padding-left: 4px; }
.tools .big { min-width: 46px; }
.search { flex: 1 1 0; min-width: 0; overflow: hidden; border-right: 0; padding-left: 8px; }
.more { flex: none; width: 10px; background: #b9bcc6; color: #666; }

/* document */
.workspace { flex: 1; min-height: 0; display: flex; overflow: hidden; }
.canvas { flex: 1; display: flex; justify-content: center; overflow: hidden; }
.page { position: relative; width: 634px; padding: 0 96px 0 95px; background: #fff; box-shadow: 0 0 12px #aaa; color: #222; font-family: "Noto Sans CJK SC", sans-serif; line-height: 17px; }
.small { margin-top: -7px; font-size: 11px; }
.large { font-size: 12px; }
.text p { margin: 0 0 17px; white-space: nowrap; }
.small p { margin-bottom: 16px; }
.small .rule { margin-bottom: 17px; }
.text .spaced { margin-top: 34px; }
.full { display: block; white-space: normal; text-align: justify; text-align-last: justify; }
.red { color: #e01818; }
.beam { position: absolute; left: 151px; top: 104px; width: 8px; height: 12px; }
.smart { position: absolute; left: 41px; top: 144px; display: flex; align-items: center; gap: 5px; }
.smart .arr { color: #bbb; }

/* candidate window */
.ime { position: absolute; left: 375px; top: 158px; width: 406px; height: 44px; padding: 0 7px; background: #fff; border: 1px solid #b4b4b8; box-shadow: 1px 1px 3px #ccc; }
.compose { width: max-content; height: 20px; border-right: 1px solid #e03030; font: 700 13px/21px "Liberation Sans", sans-serif; color: #1d5fae; }
.cands { display: flex; gap: 10px; margin: 0; padding: 2px 0 0; list-style: none; border-top: 1px solid #e4e4e4; font: 13px/18px "Noto Sans CJK SC", sans-serif; font-feature-settings: "hwid"; color: #2a84c4; white-space: nowrap; }
.first { color: #d8302c; }
.pager { position: absolute; right: 4px; bottom: 6px; width: 36px; height: 10px; }
.ime-logo { position: absolute; right: -1px; top: -1px; width: 26px; height: 26px; color: #f0a080; }

.scroll { width: 11px; flex: none; display: flex; flex-direction: column; align-items: center; gap: 7px; padding: 3px 0 6px; background: #cfcfcf; color: #777; }
.track { flex: 1; width: 100%; padding: 180px 0 0; }
.thumb { height: 69px; border: 1px solid #999; border-radius: 5px; background: #ececec; }

/* status bar */
.status { position: relative; flex: none; display: flex; align-items: center; height: 23px; padding-left: 1px; background: #e9e9e9; border-top: 1px solid #d4d4d4; color: #666; }
.cell { display: flex; align-items: center; flex: none; gap: 3px; padding: 0 5px 0 6px; border-right: 1px solid #d8d8d8; white-space: nowrap; }
.cell.open { padding-right: 3px; border-right-color: transparent; }
.cell.wide { padding: 0 10px 0 9px; }
.cell.last { padding-left: 10px; border: 0; }
.views { display: flex; gap: 1px; margin-left: auto; color: #555; }
.views .ib { height: 18px; }
.zoom { display: flex; align-items: center; gap: 4px; margin-left: 7px; padding-left: 7px; border-left: 1px solid #d0d0d0; }
.minus { margin: 0 171px 0 8px; }
.imebar { position: absolute; right: 0; bottom: 0; display: flex; align-items: center; gap: 4px; height: 21px; padding-right: 2px; background: #fff; color: #2872c0; }
.bar-logo { width: 24px; height: 24px; margin-left: -2px; color: #ea5529; }
.zh { font-size: 13px; font-weight: 700; }
.pale-ic { color: #b4bccb; }

/* taskbar */
.taskbar { flex: none; display: flex; height: 32px; background: #04122d; color: #fff; }
.task { display: grid; place-items: center; width: 38px; }
.task.open { width: 37px; margin-left: 2px; box-shadow: inset 0 -2px #76b4e8; }
.task.current { background: #2c3a52; }
.tray { margin-left: auto; display: flex; align-items: center; gap: 5px; padding-right: 14px; }
.lang { width: 14px; font-size: 11px; text-align: center; }
.tray-s { color: #ea5529; margin: 0 4px; }
.notes { position: relative; margin-left: 8px; padding-right: 6px; }
.badge { position: absolute; right: -1px; top: 5px; width: 13px; height: 13px; border: 1px solid #888; border-radius: 50%; background: #333b4b; font-size: 10px; line-height: 11px; text-align: center; }
```
